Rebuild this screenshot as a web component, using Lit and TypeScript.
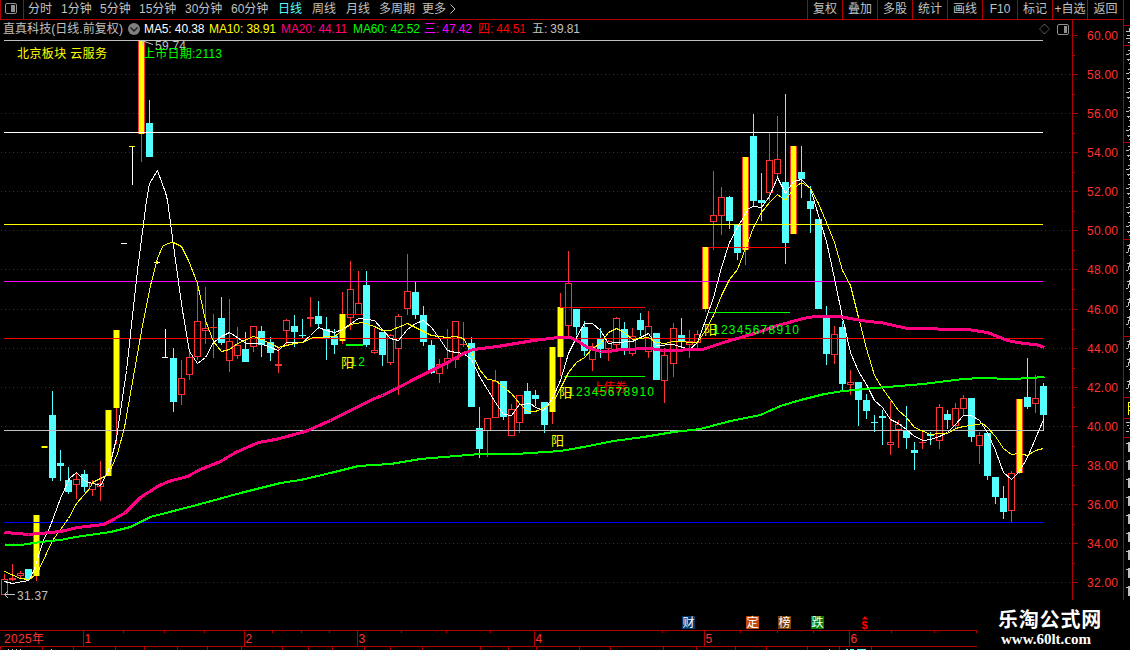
import { LitElement, html, svg, css } from "lit";
import { customElement } from "lit/decorators.js";
import { styleMap } from "lit/directives/style-map.js";

// Candle kinds: r = hollow up, c = filled down, y = highlighted up.
type Candle = [number, string, number, number, number, number];

// x, kind, high, low, body top, body bottom (exclusive bottoms)
const CANDLES: Candle[] = [
  [4, "r", 574, 595, 579, 595], [12, "r", 564, 581, 578, 580], [20, "r", 571, 579, 573, 576],
  [28, "c", 569, 581, 569, 579], [36, "y", 515, 581, 515, 576], [44, "y", 446, 448, 446, 448],
  [52, "c", 391, 481, 415, 478], [60, "c", 450, 481, 463, 466], [68, "c", 467, 494, 480, 492],
  [76, "r", 473, 499, 479, 485], [84, "c", 470, 492, 474, 487], [92, "r", 480, 496, 483, 490],
  [100, "r", 461, 501, 483, 487], [108, "y", 410, 476, 410, 476], [116, "y", 330, 444, 330, 408],
  [141, "y", 40, 162, 40, 134], [149, "c", 100, 157, 123, 157],
  [173, "c", 348, 412, 358, 402], [181, "r", 360, 405, 378, 395], [189, "r", 352, 380, 357, 375],
  [197, "r", 282, 360, 321, 357], [205, "r", 287, 344, 328, 331], [213, "r", 314, 358, 327, 328],
  [221, "c", 297, 345, 318, 343], [229, "r", 299, 372, 341, 361], [237, "r", 327, 359, 345, 356],
  [245, "c", 332, 362, 349, 362], [253, "r", 326, 352, 326, 347], [261, "c", 326, 357, 331, 345],
  [270, "c", 337, 361, 342, 353], [278, "r", 347, 373, 364, 366], [286, "r", 319, 345, 320, 331],
  [294, "c", 315, 347, 326, 332], [302, "c", 319, 338, 335, 336], [310, "r", 297, 327, 317, 319],
  [318, "c", 301, 329, 316, 324], [326, "c", 317, 360, 329, 338], [334, "c", 329, 354, 336, 345],
  [342, "y", 292, 344, 314, 341], [350, "r", 261, 330, 289, 318], [358, "r", 271, 315, 303, 315],
  [366, "c", 271, 347, 285, 345], [374, "r", 328, 354, 350, 353], [382, "c", 332, 366, 332, 355],
  [390, "r", 334, 365, 335, 363], [398, "r", 314, 395, 316, 349], [407, "r", 254, 315, 291, 309],
  [415, "c", 282, 319, 292, 315], [423, "c", 306, 346, 315, 342], [431, "c", 340, 374, 345, 373],
  [439, "r", 359, 383, 364, 374], [447, "r", 329, 369, 358, 363], [455, "r", 321, 368, 321, 360],
  [463, "r", 322, 347, 344, 345], [471, "c", 337, 407, 343, 407], [479, "c", 407, 458, 428, 449],
  [487, "r", 418, 457, 418, 431], [495, "r", 370, 418, 381, 418], [503, "c", 381, 420, 381, 417],
  [511, "r", 404, 436, 409, 436], [519, "r", 395, 433, 395, 423], [527, "c", 383, 414, 391, 414],
  [535, "c", 390, 406, 395, 399], [544, "c", 402, 433, 402, 425], [552, "y", 347, 424, 347, 412],
  [560, "y", 293, 376, 307, 357], [568, "r", 251, 336, 283, 326], [576, "c", 309, 335, 309, 327],
  [584, "c", 321, 356, 327, 351], [592, "r", 343, 371, 346, 360], [600, "c", 328, 358, 339, 349],
  [608, "r", 340, 361, 341, 349], [616, "r", 317, 352, 318, 345], [624, "c", 322, 355, 329, 351],
  [632, "r", 328, 356, 336, 354], [640, "c", 313, 336, 320, 330], [648, "r", 311, 358, 326, 352],
  [656, "c", 333, 380, 333, 380], [664, "r", 348, 403, 355, 381], [673, "r", 323, 377, 328, 364],
  [681, "c", 318, 347, 335, 342], [689, "r", 330, 358, 341, 345], [697, "r", 330, 348, 334, 343],
  [705, "y", 247, 312, 247, 309], [713, "r", 171, 250, 215, 222], [721, "r", 187, 235, 197, 216],
  [729, "c", 196, 229, 197, 221], [737, "c", 224, 260, 225, 253], [745, "y", 157, 265, 157, 250],
  [753, "c", 114, 206, 136, 201], [761, "c", 173, 221, 200, 203], [769, "r", 133, 201, 160, 193],
  [777, "r", 116, 177, 159, 174], [785, "c", 94, 264, 182, 243], [793, "y", 146, 234, 146, 234],
  [801, "c", 146, 198, 172, 179], [810, "c", 186, 233, 201, 209], [818, "c", 219, 309, 219, 309],
  [826, "c", 306, 365, 315, 354], [834, "r", 326, 364, 334, 355], [842, "c", 321, 391, 327, 384],
  [850, "r", 370, 395, 382, 385], [858, "c", 382, 426, 382, 400], [866, "c", 394, 419, 400, 411],
  [874, "c", 415, 432, 422, 423], [882, "c", 410, 445, 416, 418], [890, "r", 401, 455, 442, 445],
  [898, "r", 420, 448, 424, 430], [906, "c", 406, 449, 430, 438], [914, "c", 442, 470, 450, 453],
  [922, "r", 431, 449, 442, 443], [930, "c", 432, 445, 434, 436], [939, "r", 404, 449, 407, 441],
  [947, "c", 410, 429, 414, 420], [955, "r", 403, 429, 408, 426], [963, "r", 395, 415, 398, 409],
  [971, "c", 398, 442, 398, 437], [979, "r", 432, 464, 435, 446], [987, "c", 433, 480, 433, 476],
  [995, "c", 477, 504, 477, 497], [1003, "c", 486, 519, 498, 512], [1011, "r", 471, 522, 473, 511],
  [1019, "y", 399, 474, 399, 473], [1027, "c", 358, 409, 397, 407], [1035, "r", 375, 413, 398, 404],
  [1043, "c", 383, 431, 386, 415],
];

const MA5 = "4,581 12,583 28,580 33,571 43,540 50,525 60,498 69,478 76,472 85,481 100,485 108,470 116,438 126,370 137,270 146,200 149,183 157,170 165,192 167,200 175,260 182,310 189,351 197,363 205,357 213,342 221,336 229,332 246,343 260,343 270,347 278,350 286,342 302,342 310,335 318,327 326,330 334,332 342,329 358,318 374,320 382,329 390,338 398,340 407,329 415,323 423,320 431,327 439,338 447,350 455,352 463,353 471,359 479,376 495,402 503,414 511,415 519,404 530,403 535,407 543,410 552,398 560,380 568,353 576,337 584,323 592,323 600,330 608,343 616,342 632,341 648,333 656,345 673,344 689,349 697,342 705,320 713,297 721,267 729,242 737,227 748,208 753,206 761,207 769,196 777,177 785,193 793,181 801,179 810,188 818,215 826,241 834,278 842,317 850,352 858,371 866,384 874,400 882,407 890,419 898,423 906,429 914,436 923,440 930,439 939,436 947,432 955,424 963,415 971,415 979,420 987,432 995,450 1003,472 1011,479 1019,471 1027,457 1035,438 1043,419";
const MA10 = "4,571 20,578 28,579 36,574 39,568 52,540 68,518 76,503 90,487 92,482 108,474 117,453 124,427 134,370 142,325 150,285 157,258 162,246 167,243 173,242 181,246 188,260 197,283 205,320 213,341 221,351 229,349 237,343 253,336 261,339 270,343 278,347 294,343 302,342 313,337 334,336 342,330 350,324 362,322 374,326 382,330 390,330 407,323 415,327 431,335 447,337 455,336 463,338 471,352 479,369 487,379 495,380 511,393 519,403 527,411 535,411 552,403 560,388 568,372 576,362 584,357 592,348 600,343 608,332 616,328 624,332 632,339 648,337 656,342 664,343 673,341 697,342 705,330 713,315 721,295 729,279 737,269 745,248 753,227 761,212 769,202 777,194 785,200 793,188 801,182 810,188 818,203 826,222 834,242 842,270 850,285 858,317 866,348 874,375 882,388 890,399 898,410 906,417 914,427 930,434 939,433 947,433 955,428 963,426 971,425 982,423 987,427 995,436 1003,448 1011,454 1019,453 1027,455 1035,450 1043,448";
const MA20 = "4,532 28,534 39,533 60,531 77,527 103,524 113,519 125,512 140,497 157,486 168,481 187,476 200,469 220,461 235,452 258,442 275,439 305,431 330,420 374,398 382,395 398,387 417,377 447,362 465,352 473,349 497,346 533,340 558,337 570,337 578,341 587,347 600,351 608,351 620,349 650,348 663,350 702,349 723,342 757,332 777,325 803,318 817,315.5 835,315.5 850,318 867,321 880,322 907,328 967,329 987,332 997,336 1007,340 1017,342 1037,344.5 1044,347";
const MA60 = "4,545 20,545 40,542 60,540 75,537 110,532 130,527 150,517 200,504 240,493 280,483 300,480 330,473 358,466 390,464 420,459 480,454 515,454 560,451 583,447 613,441 643,437 673,432 700,429 730,421 760,415 780,406 800,400 824,394 843,391 875,388 923,384 963,379 980,378 1013,379 1044,377";

const LEVELS: [number, string][] = [
  [40, "#c0c0c0"], [132, "#ffffff"], [224, "#ffff00"], [281, "#ff00ff"],
  [338, "#ff0000"], [430, "#c0c0c0"], [522, "#0000ff"],
];

const SCALE_Y = [35, 74, 113, 152, 191, 230, 269, 309, 348, 387, 426, 465, 504, 543, 582];

const PERIODS: [string, number][] = [
  ["分时", 33], ["1分钟", 39], ["5分钟", 39], ["15分钟", 46], ["30分钟", 46], ["60分钟", 47],
  ["日线", 34], ["周线", 34], ["月线", 33], ["多周期", 43], ["更多", 26],
];
const ACTIONS = ["复权", "叠加", "多股", "统计", "画线", "F10", "标记", "+自选", "返回"];
const READOUTS: [string, string, number][] = [
  ["MA5: 40.38", "#ffffff", 65], ["MA10: 38.91", "#ffff00", 72], ["MA20: 44.11", "#ff0080", 72],
  ["MA60: 42.52", "#00ff00", 71], ["三: 47.42", "#ff00ff", 54], ["四: 44.51", "#ff0000", 54],
  ["五: 39.81", "#c0c0c0", 50],
];

const label = (x: number, y: number, w: number, color: string, text: string, size = 12) =>
  svg`<text x=${x} y=${y} textLength=${w} lengthAdjust="spacing" fill=${color} font-size=${size}>${text}</text>`;

const box = (x: number, y: number, w: number, h: number, color: string) =>
  svg`<rect x=${x} y=${y} width=${w} height=${h} fill=${color}></rect>`;

const candle = ([x, kind, high, low, top, bottom]: Candle) => {
  const h = bottom - top;
  if (kind === "c") return svg`${box(x, high, 1, low - high, "#54ffff")}${box(x - 3, top, 7, h, "#54ffff")}`;
  if (kind === "y")
    return svg`${box(x, high, 1, low - high, "#ff3232")}${box(x - 3, top, 7, h, "#ff3232")}${box(x - 2, top, 5, h, "#ffff00")}`;
  if (h <= 2) return svg`${box(x, high, 1, low - high, "#ff3232")}${box(x - 3, top, 7, h, "#ff3232")}`;
  return svg`${high < top ? box(x, high, 1, top - high, "#ff3232") : ""}${low > bottom ? box(x, bottom, 1, low - bottom, "#ff3232") : ""}
    <rect x=${x - 2.5} y=${top + 0.5} width="6" height=${h - 1} fill="none" stroke="#ff3232"></rect>`;
};

const SHARED = css`
  :host { display: block; font-family: "Liberation Sans", "Noto Sans CJK SC", sans-serif; font-size: 12px; }
  svg { display: block; }
`;

@customElement("period-toolbar")
class PeriodToolbar extends LitElement {
  static styles = [SHARED, css`
    .bar { display: flex; height: 19px; border-bottom: 1px solid #b00000; color: #c0c0c0; line-height: 19px; }
    .toggle { width: 22px; border-left: 1px solid #b00000; border-right: 1px solid #b00000; flex: none; }
    .periods { display: flex; flex: 1; padding-left: 4px; white-space: nowrap; }
    .period.on { color: #54ffff; }
    .actions { display: flex; flex: none; }
    .action { display: flex; justify-content: center; width: 34px; border-left: 1px solid #b00000; white-space: nowrap; }
    .action:last-child { width: 35px; }
  `];
  render() {
    return html`<div class="bar">
      <div class="toggle"><svg width="22" height="19">
        <rect x="4.5" y="3.5" width="11" height="10" rx="1.5" fill="none" stroke="#909090"></rect>
        <rect x="10" y="5" width="4" height="7" fill="#909090"></rect>
      </svg></div>
      <div class="periods">
        ${PERIODS.map(([t, w]) => html`<span class="period ${t === "日线" ? "on" : ""}" style=${styleMap({ width: `${w}px` })}>${t}</span>`)}
        <svg width="8" height="18"><path d="M2.500 4.500L7 9L2.500 13.500" fill="none" stroke="#c0c0c0"></path></svg>
      </div>
      <div class="actions">${ACTIONS.map((t) => html`<span class="action">${t}</span>`)}</div>
    </div>`;
  }
}

@customElement("indicator-bar")
class IndicatorBar extends LitElement {
  static styles = [SHARED, css`
    .bar { display: flex; height: 18px; line-height: 18px; color: #c0c0c0; white-space: nowrap; padding-left: 3px; }
    .name { width: 124px; letter-spacing: 0.05px; }
    .readouts { display: flex; flex: 1; padding-left: 3px; letter-spacing: -0.1px; }
  `];
  render() {
    return html`<div class="bar">
      <span class="name">直真科技(日线.前复权)</span>
      <svg width="14" height="18">
        <circle cx="7" cy="9" r="6" fill="#808080"></circle>
        <path d="M3.5 7.5L7 11L10.5 7.5" fill="none" stroke="#202020" stroke-width="1.5"></path>
      </svg>
      <div class="readouts">
        ${READOUTS.map(([t, c, w]) => html`<span style=${styleMap({ color: c, width: `${w}px` })}>${t}</span>`)}
      </div>
      <svg width="33" height="18">
        <path d="M5.5 4L10.5 9L5.5 14L0.5 9Z" fill="none" stroke="#909090" stroke-dasharray="1 0.6"></path>
        <rect x="18.5" y="4.5" width="11" height="10" rx="1.5" fill="none" stroke="#909090"></rect>
        <rect x="25" y="6" width="3" height="7" fill="#909090"></rect>
      </svg>
    </div>`;
  }
}

@customElement("candle-chart")
class CandleChart extends LitElement {
  static styles = SHARED;
  render() {
    return html`<svg width="1072" height="562" viewBox="0 38 1072 562">
      <g shape-rendering="crispEdges">
        ${SCALE_Y.slice(1).map((y) => svg`<path d="M1 ${y + 0.5}H1071" stroke="#a00000" stroke-dasharray="1 3"></path>`)}
        ${CANDLES.map(candle)}
        ${box(121, 243, 6, 1, "#ffffff")}
        ${box(132, 146, 1, 39, "#ffffff")}${box(129, 146, 6, 1, "#ffff00")}
        ${box(157, 261, 1, 3, "#ffffff")}${box(154, 262, 6, 1, "#ffffff")}
        ${box(165, 329, 1, 29, "#ffffff")}${box(162, 357, 6, 1, "#ffffff")}
        ${LEVELS.map(([y, c]) => box(4, y, 1039, 1, c))}
        ${box(346, 314, 17, 1, "#ff0000")}${box(346, 344, 17, 2, "#00ff00")}
        ${box(560, 307, 85, 1, "#ff0000")}${box(564, 376, 81, 1, "#00ff00")}
        ${box(709, 247, 81, 1, "#ff0000")}${box(709, 312, 81, 1, "#00ff00")}
        <g fill="none" transform="translate(.5 .5)">
          <polyline points=${MA5} stroke="#ffffff"></polyline>
          <polyline points=${MA10} stroke="#ffff00"></polyline>
          <polyline points=${MA20} stroke="#ff0080" stroke-width="3"></polyline>
          <polyline points=${MA60} stroke="#00ff00" stroke-width="2" transform="translate(0 -.5)"></polyline>
        </g>
      </g>
      <path d="M143 41L153 44.5M143 41V46M143 41L147 40.5" fill="none" stroke="#c0c0c0"></path>
      <path d="M4 594.5H15M8 591L4.5 594.5L8 598" fill="none" stroke="#c0c0c0"></path>
      ${label(155, 50, 31, "#c0c0c0", "59.74")}
      ${label(17, 599.5, 31, "#c0c0c0", "31.37")}
      ${label(17, 58, 90, "#ffff00", "北京板块 云服务")}
      ${label(143, 57.5, 79, "#00ff00", "上市日期:2113")}
      ${label(350, 366, 15, "#00ff00", "12")}
      ${label(341, 366.5, 13, "#ffff00", "阳", 13)}
      ${label(592, 392, 35, "#ff0000", "上传券")}
      ${label(568, 396, 86, "#00ff00", "12345678910")}
      ${label(559, 396.5, 13, "#ffff00", "阳", 13)}
      ${label(551, 444.5, 13, "#ffff00", "阳", 13)}
      ${label(713, 334, 86, "#00ff00", "12345678910")}
      ${label(704, 334, 13, "#ffff00", "阳", 13)}
    </svg>`;
  }
}

@customElement("price-scale")
class PriceScale extends LitElement {
  static styles = SHARED;
  render() {
    return html`<svg width="51" height="580" viewBox="1072 20 51 580">
      <g shape-rendering="crispEdges">
        ${box(1072, 20, 1, 580, "#b00000")}
        ${SCALE_Y.map((y, i) => svg`${box(1072, y, 6, 1, "#b00000")}${i < 14 ? box(1072, y + 20, 3, 1, "#b00000") : ""}`)}
      </g>
      ${SCALE_Y.map((y, i) => label(1087, y + 5, 31, "#ff3232", `${60 - i * 2}.00`))}
    </svg>`;
  }
}

// Left edge of the quote panel that is cut off by the window.
@customElement("quote-edge")
class QuoteEdge extends LitElement {
  static styles = SHARED;
  render() {
    const rows = [50, 69, 88, 107, 126, 146, 165, 184, 203, 222];
    return html`<svg width="7" height="600" viewBox="1123 0 7 600" shape-rendering="crispEdges">
      ${box(1123, 0, 1, 600, "#b00000")}
      ${[25, 45, 142, 239, 336, 397, 418, 437].map((y) => box(1123, y, 7, 1, "#b00000"))}
      <path d="M1129 28V32M1126 31.5H1130M1127 35.5H1130M1126 38.5H1130M1128 42.5H1130" stroke="#c0c0c0" fill="none"></path>
      ${rows.map((y) => svg`<path transform="translate(0 ${y})" d="M1128 .5H1130M1129 3.5H1130M1126 4.5H1129M1127 9.5H1130M1128 10.5H1129M1129 13.5H1130" stroke="#c0c0c0" fill="none"></path>`)}
      ${[244, 262, 280, 298, 316, 340, 358, 380].map((y) => svg`<path transform="translate(0 ${y})" d="M1127 1.5H1130M1129.500 0V5M1128.500 4V8M1126 8.500H1128M1129 11.500H1130" stroke="#c0c0c0" fill="none"></path>`)}
      <path d="M1130 402.500H1128.500V415M1129 406.500H1130M1129 410.500H1130" stroke="#ffff00" fill="none"></path>
      <path d="M1126 422.500H1130M1129 425.500H1127M1126 431.500H1129M1129 428.500H1130" stroke="#c0c0c0" fill="none"></path>
      ${[442, 460, 478, 496, 514, 532, 550, 568, 586].map((y) => svg`${box(1128, y, 2, 10, "#c0c0c0")}${box(1126, y + 1, 2, 1, "#c0c0c0")}`)}
    </svg>`;
  }
}

@customElement("event-row")
class EventRow extends LitElement {
  static styles = SHARED;
  render() {
    const badges: [string, number, string][] = [
      ["财", 682, "#003870"], ["定", 746, "#c04810"], ["榜", 778, "#804000"], ["跌", 811, "#008000"],
    ];
    return html`<svg width="977" height="30" viewBox="0 600 977 30">
      ${badges.map(([t, x, c]) => svg`${box(x, 616, 13, 13, c)}${label(x + 0.5, 627, 12, "#ffffff", t)}`)}
      <path d="M862 619.500H868L865 616Z" fill="#ff0000"></path>
      <text x="861.500" y="629" fill="#ff0000" font-size="11" font-weight="bold">$</text>
    </svg>`;
  }
}

@customElement("date-axis")
class DateAxis extends LitElement {
  static styles = SHARED;
  render() {
    const months: [number, string][] = [[83, "1"], [244, "2"], [357, "3"], [534, "4"], [704, "5"], [849, "6"]];
    const minor = [123, 164, 204, 272, 301, 329, 401, 446, 490, 662, 740, 777, 813, 891, 934, 976];
    const lower = [0, 42, 73, 115, 144, 177, 207, 241, 282, 308, 332, 364, 390, 422, 480, 508, 536, 579, 610, 663, 696, 735, 766, 807, 839, 871];
    return html`<svg width="977" height="20" viewBox="0 630 977 20">
      <g shape-rendering="crispEdges">
        ${box(0, 630, 977, 1, "#b00000")}${box(0, 646, 977, 1, "#b00000")}
        ${months.map(([x]) => box(x, 630, 1, 17, "#b00000"))}
        ${minor.map((x) => box(x, 630, 1, 3, "#b00000"))}
        ${lower.map((x) => box(x, 646, 1, 4, "#b00000"))}
        ${[8, 12, 16, 20, 51].map((x) => box(x, 649, 1, 1, "#c0c0c0"))}
        ${box(829, 649, 1, 1, "#54ffff")}${box(846, 649, 2, 1, "#54ffff")}${box(850, 649, 4, 1, "#54ffff")}${box(857, 649, 9, 1, "#54ffff")}
      </g>
      ${label(4, 643, 40, "#ff3232", "2025年")}
      ${months.map(([x, t]) => label(x + 1.5, 643, 7, "#ff3232", t))}
    </svg>`;
  }
}

@customElement("app-root")
class AppRoot extends LitElement {
  static styles = css`
    :host { display: block; width: 1130px; height: 650px; overflow: hidden; background: #000; }
    .window { display: flex; height: 600px; }
    .left { width: 1123px; flex: none; }
    .body { display: flex; }
    .chart { width: 1072px; }
    .footer { display: flex; height: 50px; }
    .axis { width: 977px; }
    .brand { flex: 1; padding: 7px 0 0 21px; color: #fff; white-space: nowrap; }
    .title { font: bold 20px/24px "Noto Sans CJK SC", sans-serif; letter-spacing: 0.8px; }
    .url { font: bold 15px/16px "Liberation Serif", serif; padding-left: 3px; }
    .toolbar { display: block; }
  `;
  render() {
    return html`
      <div class="window">
        <div class="left">
          <period-toolbar class="toolbar"></period-toolbar>
          <div class="body">
            <div class="chart"><indicator-bar></indicator-bar><candle-chart></candle-chart></div>
            <price-scale></price-scale>
          </div>
        </div>
        <quote-edge></quote-edge>
      </div>
      <div class="footer">
        <div class="axis"><event-row></event-row><date-axis></date-axis></div>
        <div class="brand"><div class="title">乐淘公式网</div><div class="url">www.60lt.com</div></div>
      </div>`;
  }
}
